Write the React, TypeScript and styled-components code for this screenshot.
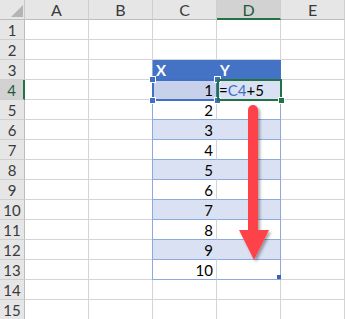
import React from 'react';
import styled, { createGlobalStyle, css } from 'styled-components';

const GlobalStyle = createGlobalStyle`
  html, body {
    margin: 0;
    padding: 0;
    background: #ffffff;
    overflow: hidden;
  }
  body {
    font-family: Lato, "Noto Sans", "Liberation Sans", sans-serif;
  }
`;

const COLS = ['A', 'B', 'C', 'D', 'E'];
const ROW_COUNT = 15;
const TABLE_FIRST = 3;
const TABLE_LAST = 13;

const GRID = '#d4d4d4';
const HEAD_BG = '#e6e6e6';
const HEAD_SEL = '#d2d2d2';
const TABLE_LINE = '#8ea9db';
const TABLE_HEAD = '#4472c4';
const BAND = '#d9e1f2';
const GREEN = '#217346';
const REF_BLUE = '#3f6fc6';

const Sheet = styled.div`
  position: relative;
  display: grid;
  grid-template-columns: 25px repeat(5, 64px);
  grid-auto-rows: 20px;
  width: 345px;
  font-size: 15px;
  color: #000;
`;

const Corner = styled.div`
  position: relative;
  background: ${HEAD_BG};
  border-right: 1px solid #c8c8c8;
  border-bottom: 1px solid #bdbdbd;
  box-sizing: border-box;
`;

const ColHead = styled.div<{ $selected?: boolean }>`
  display: flex;
  align-items: center;
  justify-content: center;
  box-sizing: border-box;
  background: ${(p) => (p.$selected ? HEAD_SEL : HEAD_BG)};
  border-right: 1px solid #cfcfcf;
  border-bottom: ${(p) => (p.$selected ? `2px solid ${GREEN}` : '1px solid #bdbdbd')};
  color: ${(p) => (p.$selected ? '#1e5a3a' : '#3a3a3a')};
  font-size: 16px;
`;

const RowHead = styled.div<{ $selected?: boolean }>`
  display: flex;
  align-items: center;
  justify-content: center;
  box-sizing: border-box;
  background: ${(p) => (p.$selected ? HEAD_SEL : HEAD_BG)};
  border-bottom: 1px solid #cfcfcf;
  border-right: ${(p) => (p.$selected ? `2px solid ${GREEN}` : '1px solid #bdbdbd')};
  color: ${(p) => (p.$selected ? '#1e5a3a' : '#3a3a3a')};
  font-size: 15px;
`;

const Cell = styled.div`
  box-sizing: border-box;
  border-right: 1px solid ${GRID};
  border-bottom: 1px solid ${GRID};
`;

type Kind = 'head' | 'band' | 'plain' | 'picked';

const fills: Record<Kind, string> = {
  head: TABLE_HEAD,
  band: BAND,
  plain: '#ffffff',
  picked: '#c7d1ea',
};

const TableCell = styled.div<{ $kind: Kind; $first?: boolean; $align?: 'left' | 'right' }>`
  display: flex;
  align-items: center;
  justify-content: ${(p) => (p.$align === 'right' ? 'flex-end' : 'flex-start')};
  padding: 0 3px 0 2px;
  box-sizing: border-box;
  background: ${(p) => fills[p.$kind]};
  border-bottom: 1px solid ${(p) => (p.$kind === 'head' ? TABLE_HEAD : TABLE_LINE)};
  ${(p) =>
    p.$first
      ? css`
          border-right: 1px solid ${p.$kind === 'plain' ? GRID : fills[p.$kind]};
          box-shadow: -1px 0 0 ${TABLE_LINE};
        `
      : css`
          border-right: 1px solid ${p.$kind === 'head' ? TABLE_HEAD : TABLE_LINE};
        `}
  ${(p) =>
    p.$kind === 'head' &&
    css`
      color: #fff;
      font-weight: 700;
      padding-left: 3px;
    `}
`;

const Ref = styled.span`
  color: ${REF_BLUE};
`;

type Spot = 'tl' | 'tr' | 'bl' | 'br';

const Handle = styled.span<{ $color: string; $spot: Spot }>`
  position: absolute;
  width: 5px;
  height: 5px;
  background: ${(p) => p.$color};
  box-shadow: 0 0 0 1px #fff;
  ${(p) => (p.$spot[0] === 't' ? 'top: -4px;' : 'bottom: -4px;')}
  ${(p) => (p.$spot[1] === 'l' ? 'left: -4px;' : 'right: -4px;')}
`;

const RefBox = styled.div`
  position: absolute;
  left: 152px;
  top: 79px;
  width: 66px;
  height: 22px;
  box-sizing: border-box;
  border: 2px solid ${REF_BLUE};
  pointer-events: none;
`;

const ActiveBox = styled.div`
  position: absolute;
  left: 217px;
  top: 79px;
  width: 65px;
  height: 22px;
  box-sizing: border-box;
  border: 2px solid ${GREEN};
  pointer-events: none;
`;

const FillMark = styled.span`
  position: absolute;
  left: 277px;
  top: 275px;
  width: 4px;
  height: 4px;
  background: #3f5fb5;
`;

const Arrow = styled.svg`
  position: absolute;
  left: 230px;
  top: 100px;
  overflow: visible;
`;

const CornerMark = styled.svg`
  position: absolute;
  left: 0;
  top: 0;
`;

function tableRow(row: number) {
  const value = row - 3;
  if (row === TABLE_FIRST) {
    return [
      <TableCell key="c" $kind="head" $first>X</TableCell>,
      <TableCell key="d" $kind="head">Y</TableCell>,
    ];
  }
  if (row === 4) {
    return [
      <TableCell key="c" $kind="picked" $first $align="right">{value}</TableCell>,
      <TableCell key="d" $kind="band">
        =<Ref>C4</Ref>+5
      </TableCell>,
    ];
  }
  const kind: Kind = row % 2 === 0 ? 'band' : 'plain';
  return [
    <TableCell key="c" $kind={kind} $first $align="right">{value}</TableCell>,
    <TableCell key="d" $kind={kind} />,
  ];
}

const App: React.FC = () => {
  const rows = Array.from({ length: ROW_COUNT }, (_, i) => i + 1);

  return (
    <>
      <GlobalStyle />
      <Sheet>
        <Corner>
          <CornerMark width="25" height="20">
            <polygon points="11,17 23,17 23,5" fill="#b4b4b4" />
          </CornerMark>
        </Corner>
        {COLS.map((c) => (
          <ColHead key={c} $selected={c === 'D'}>{c}</ColHead>
        ))}

        {rows.map((row) => {
          const inTable = row >= TABLE_FIRST && row <= TABLE_LAST;
          return (
            <React.Fragment key={row}>
              <RowHead $selected={row === 4}>{row}</RowHead>
              <Cell />
              <Cell />
              {inTable ? tableRow(row) : [<Cell key="c" />, <Cell key="d" />]}
              <Cell />
            </React.Fragment>
          );
        })}

        <RefBox>
          <Handle $color={REF_BLUE} $spot="tl" />
          <Handle $color={REF_BLUE} $spot="tr" />
          <Handle $color={REF_BLUE} $spot="bl" />
          <Handle $color={REF_BLUE} $spot="br" />
        </RefBox>
        <ActiveBox>
          <Handle $color={GREEN} $spot="br" />
        </ActiveBox>
        <FillMark />

        <Arrow width="50" height="170" viewBox="0 0 50 170">
          <defs>
            <filter id="shadow" x="-50%" y="-20%" width="200%" height="140%">
              <feDropShadow dx="2" dy="2" stdDeviation="1.6" floodColor="#000" floodOpacity="0.35" />
            </filter>
          </defs>
          <g filter="url(#shadow)" fill="#fe4348">
            <rect x="18" y="5" width="10" height="130" rx="5" />
            <polygon points="9,130 39,130 24,160" />
          </g>
        </Arrow>
      </Sheet>
    </>
  );
};

export default App;
